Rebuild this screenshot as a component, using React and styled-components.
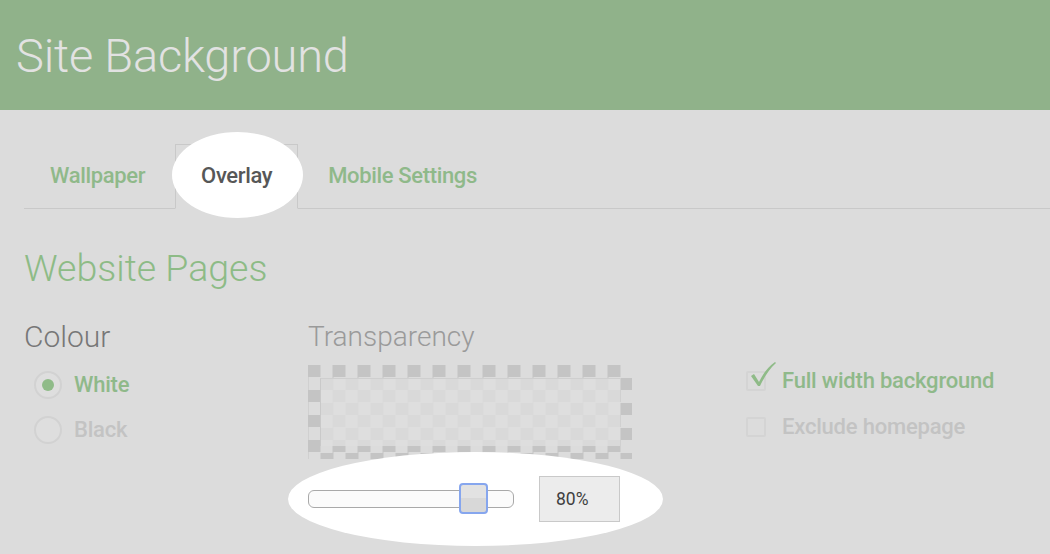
import React from "react";
import styled, { createGlobalStyle } from "styled-components";

const Global = createGlobalStyle`
  html, body { margin: 0; padding: 0; }
  body {
    background: #dcdcdc;
    font-family: Roboto, "Liberation Sans", sans-serif;
    width: 1050px;
    height: 554px;
    overflow: hidden;
  }
`;

const Page = styled.div`
  position: relative;
  width: 1050px;
  height: 554px;
  background: #dcdcdc;
  overflow: hidden;
`;

const Header = styled.header`
  height: 110px;
  background: #90b28a;
  display: flex;
  align-items: center;
  padding-left: 16px;
  box-sizing: border-box;
`;

const Title = styled.h1`
  margin: 0;
  font-weight: 300;
  font-size: 47px;
  color: #e2e2e2;
  letter-spacing: -0.2px;
  line-height: 1;
  padding-top: 1px;
`;

const Body = styled.div`
  padding: 34px 0 0 24px;
`;

const TabRow = styled.div`
  display: flex;
  border-bottom: 1px solid #c9c9c9;
  height: 64px;
`;

const Tab = styled.div`
  display: flex;
  align-items: center;
  padding: 0 25px 2px;
  margin-right: 4px;
  box-sizing: border-box;
  height: 65px;
  font-size: 22px;
  font-weight: 500;
  color: ${(p) => (p.$active ? "#575757" : "#8fb98a")};
  border: 1px solid ${(p) => (p.$active ? "#c9c9c9" : "transparent")};
  border-bottom-color: ${(p) => (p.$active ? "#dcdcdc" : "transparent")};
  letter-spacing: -0.35px;
`;

const TabText = styled.span`
  position: relative;
  z-index: 2;
`;

const SectionTitle = styled.h2`
  margin: 41px 0 0;
  font-weight: 300;
  font-size: 37.5px;
  color: #8dbb86;
  line-height: 1;
`;

const Columns = styled.div`
  display: flex;
  margin-top: 34px;
`;

const ColourCol = styled.div`
  width: 284px;
`;

const Label = styled.div`
  font-weight: 300;
  font-size: ${(p) => p.$size || 28}px;
  line-height: 1;
  color: ${(p) => p.$color || "#777"};
  margin-top: ${(p) => p.$top || 0}px;
`;

const OptionList = styled.div`
  display: flex;
  flex-direction: column;
  gap: ${(p) => p.$gap || 19}px;
  margin-top: ${(p) => p.$top || 0}px;
`;

const Option = styled.div`
  display: flex;
  align-items: center;
  height: 26px;
  font-size: 22px;
  font-weight: 500;
  letter-spacing: -0.2px;
  color: ${(p) => (p.$on ? "#8fb98a" : "#c3c3c3")};
`;

const Radio = styled.span`
  width: 24px;
  height: 24px;
  border-radius: 50%;
  border: 2px solid #d2d2d2;
  background: #dedede;
  display: flex;
  align-items: center;
  justify-content: center;
  margin: 0 12px 0 10px;
  flex: none;
  &::after {
    content: "";
    width: 12px;
    height: 12px;
    border-radius: 50%;
    background: ${(p) => (p.$on ? "#8fbb88" : "transparent")};
  }
`;

const TransCol = styled.div`
  width: 438px;
`;

const Checker = styled.div`
  margin-top: 14px;
  width: 324px;
  height: 94px;
  padding: 13px 12px 0;
  box-sizing: border-box;
  background-color: #dcdcdc;
  background-image: repeating-conic-gradient(#c4c4c4 0 25%, transparent 0 50%);
  background-size: 25px 25px;
  background-position: 12.5px 0;
`;

const OverlayBox = styled.div`
  width: 300px;
  height: 68px;
  background: rgba(222, 222, 222, 0.82);
  border-left: 1px solid #c9c9c9;
  border-top: 1px solid #cfcfcf;
  box-sizing: border-box;
`;

const SliderRow = styled.div`
  display: flex;
  align-items: center;
  margin-top: 17px;
  position: relative;
  z-index: 2;
`;

const Track = styled.div`
  position: relative;
  width: 206px;
  height: 18px;
  box-sizing: border-box;
  border: 1px solid #a9a9a9;
  border-radius: 6px;
  background: #fbfbfb;
`;

const Thumb = styled.div`
  position: absolute;
  left: 150px;
  top: -8px;
  width: 29px;
  height: 31px;
  box-sizing: border-box;
  border: 2px solid #86a6ee;
  border-radius: 4px;
  background: linear-gradient(#e2e2e2 0 50%, #d8d8d8 50% 100%);
`;

const ValueBox = styled.div`
  margin-left: 25px;
  width: 81px;
  height: 46px;
  box-sizing: border-box;
  border: 1px solid #c9c9c9;
  background: #ececec;
  display: flex;
  align-items: center;
  padding-left: 16px;
  font-size: 17.5px;
  font-weight: 400;
  color: #3f3f3f;
`;

const CheckCol = styled.div`
  padding-top: 46px;
`;

const Box = styled.span`
  position: relative;
  width: 20px;
  height: 20px;
  box-sizing: border-box;
  border: 2px solid #d4d4d4;
  border-radius: 2px;
  background: #dcdcdc;
  margin-right: 16px;
  flex: none;
`;

const Tick = styled.svg`
  position: absolute;
  left: 1px;
  top: -12px;
`;

const Highlight = styled.div`
  position: absolute;
  left: ${(p) => p.$x}px;
  top: ${(p) => p.$y}px;
  width: ${(p) => p.$w}px;
  height: ${(p) => p.$h}px;
  border-radius: 50%;
  background: #fff;
  z-index: 1;
`;

export default function App() {
  return (
    <Page>
      <Global />
      <Header>
        <Title>Site Background</Title>
      </Header>
      <Highlight $x={172} $y={132} $w={131} $h={86} />
      <Highlight $x={288} $y={452} $w={375} $h={94} />
      <Body>
        <TabRow>
          <Tab>Wallpaper</Tab>
          <Tab $active>
            <TabText>Overlay</TabText>
          </Tab>
          <Tab>Mobile Settings</Tab>
        </TabRow>
        <SectionTitle>Website Pages</SectionTitle>
        <Columns>
          <ColourCol>
            <Label $size={30}>Colour</Label>
            <OptionList $top={20}>
              <Option $on>
                <Radio $on />
                White
              </Option>
              <Option>
                <Radio />
                Black
              </Option>
            </OptionList>
          </ColourCol>
          <TransCol>
            <Label $color="#9a9a9a" $top={1}>Transparency</Label>
            <Checker>
              <OverlayBox />
            </Checker>
            <SliderRow>
              <Track>
                <Thumb />
              </Track>
              <ValueBox>80%</ValueBox>
            </SliderRow>
          </TransCol>
          <CheckCol>
            <OptionList $gap={20}>
              <Option $on>
                <Box>
                  <Tick width="28" height="26" viewBox="0 0 28 26">
                    <path
                      d="M2 15 L5 13 L10 21 Q16 8 26 1 L27 2 Q18 10 11 25 L9 25 Z"
                      fill="#8fbb88"
                    />
                  </Tick>
                </Box>
                Full width background
              </Option>
              <Option>
                <Box />
                Exclude homepage
              </Option>
            </OptionList>
          </CheckCol>
        </Columns>
      </Body>
    </Page>
  );
}
